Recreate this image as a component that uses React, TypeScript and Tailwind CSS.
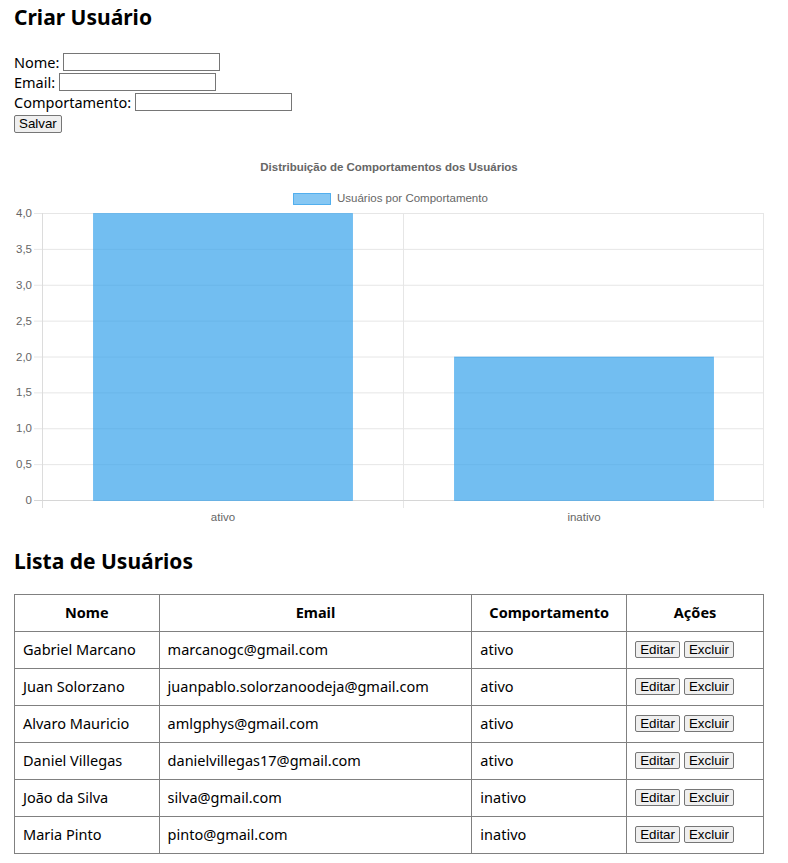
import React from "react";

const users = [
  { nome: "Gabriel Marcano", email: "marcanogc@gmail.com", comp: "ativo" },
  { nome: "Juan Solorzano", email: "juanpablo.solorzanoodeja@gmail.com", comp: "ativo" },
  { nome: "Alvaro Mauricio", email: "amlgphys@gmail.com", comp: "ativo" },
  { nome: "Daniel Villegas", email: "danielvillegas17@gmail.com", comp: "ativo" },
  { nome: "João da Silva", email: "silva@gmail.com", comp: "inativo" },
  { nome: "Maria Pinto", email: "pinto@gmail.com", comp: "inativo" },
];

function Chart() {
  const top = 63;
  const bottom = 350;
  const step = (bottom - top) / 8;
  const ticks = ["4,0", "3,5", "3,0", "2,5", "2,0", "1,5", "1,0", "0,5", "0"];
  return (
    <svg width="750" height="380" className="block" style={{ fontFamily: "Liberation Sans, Arial, sans-serif" }}>
      <text x="375" y="21" textAnchor="middle" fontSize="11.5" fontWeight="bold" fill="#666">
        Distribuição de Comportamentos dos Usuários
      </text>
      <rect x="279.5" y="43.5" width="37" height="11" fill="rgba(54,162,235,0.6)" stroke="rgba(54,162,235,0.8)" />
      <text x="323" y="52" fontSize="11.5" fill="#666">Usuários por Comportamento</text>
      {ticks.map((t, i) => (
        <g key={t}>
          <line x1="20" x2="750" y1={top + i * step + 0.5} y2={top + i * step + 0.5} stroke="#e6e6e6" />
          <text x="18" y={top + i * step + 4} fontSize="11.5" fill="#666" textAnchor="end">{t}</text>
        </g>
      ))}
      <line x1="28.5" x2="28.5" y1={top} y2={bottom + 8} stroke="#dcdcdc" />
      <line x1="389.5" x2="389.5" y1={top} y2={bottom + 8} stroke="#e6e6e6" />
      <line x1="749.5" x2="749.5" y1={top} y2={bottom + 8} stroke="#e6e6e6" />
      <line x1="20" x2="750" y1={bottom + 0.5} y2={bottom + 0.5} stroke="#d6d6d6" />
      <rect x="79.5" y={top + 0.5} width="259" height={bottom - top} fill="rgba(54,162,235,0.7)" stroke="rgba(54,162,235,0.5)" />
      <rect x="440.5" y={top + 4 * step + 0.5} width="259" height={bottom - top - 4 * step} fill="rgba(54,162,235,0.7)" stroke="rgba(54,162,235,0.5)" />
      <text x="209" y="371" fontSize="11.5" fill="#666" textAnchor="middle">ativo</text>
      <text x="570" y="371" fontSize="11.5" fill="#666" textAnchor="middle">inativo</text>
    </svg>
  );
}

const btn =
  "bg-[#efefef] border border-[#767676] rounded-[2px] px-[4px] text-[13.33px] leading-[15px] text-black font-['Liberation_Sans',Arial,sans-serif]";

export default function App() {
  return (
    <div className="px-[14px] pt-[2px] text-black bg-white font-['Segoe_UI','Noto_Sans',sans-serif] text-[14.5px]">
      <h2 className="text-[21px] font-bold leading-[30px]">Criar Usuário</h2>
      <form className="mt-[20px] leading-[20px]">
        <div className="flex items-center gap-[4px]">
          <span>Nome:</span>
          <input className="w-[157px] h-[18px] border border-[#767676]" />
        </div>
        <div className="flex items-center gap-[4px]">
          <span>Email:</span>
          <input className="w-[157px] h-[18px] border border-[#767676]" />
        </div>
        <div className="flex items-center gap-[4px]">
          <span>Comportamento:</span>
          <input className="w-[157px] h-[18px] border border-[#767676]" />
        </div>
        <button type="button" className={btn + " h-[18px] mt-[1px]"}>Salvar</button>
      </form>
      <div className="mt-[17px]">
        <Chart />
      </div>
      <h2 className="text-[21px] font-bold leading-[30px] mt-[16px]">Lista de Usuários</h2>
      <table className="mt-[18px] w-[750px] border-collapse">
        <thead>
          <tr className="h-[37px]">
            <th className="w-[145px] border border-[#808080] font-bold">Nome</th>
            <th className="w-[313px] border border-[#808080] font-bold">Email</th>
            <th className="w-[155px] border border-[#808080] font-bold">Comportamento</th>
            <th className="w-[137px] border border-[#808080] font-bold">Ações</th>
          </tr>
        </thead>
        <tbody>
          {users.map((u) => (
            <tr key={u.email} className="h-[37px]">
              <td className="border border-[#808080] px-[8px]">{u.nome}</td>
              <td className="border border-[#808080] px-[8px]">{u.email}</td>
              <td className="border border-[#808080] px-[8px]">{u.comp}</td>
              <td className="border border-[#808080] px-[8px]">
                <div className="flex gap-[4px]">
                  <button className={btn + " h-[17px]"}>Editar</button>
                  <button className={btn + " h-[17px]"}>Excluir</button>
                </div>
              </td>
            </tr>
          ))}
        </tbody>
      </table>
    </div>
  );
}
